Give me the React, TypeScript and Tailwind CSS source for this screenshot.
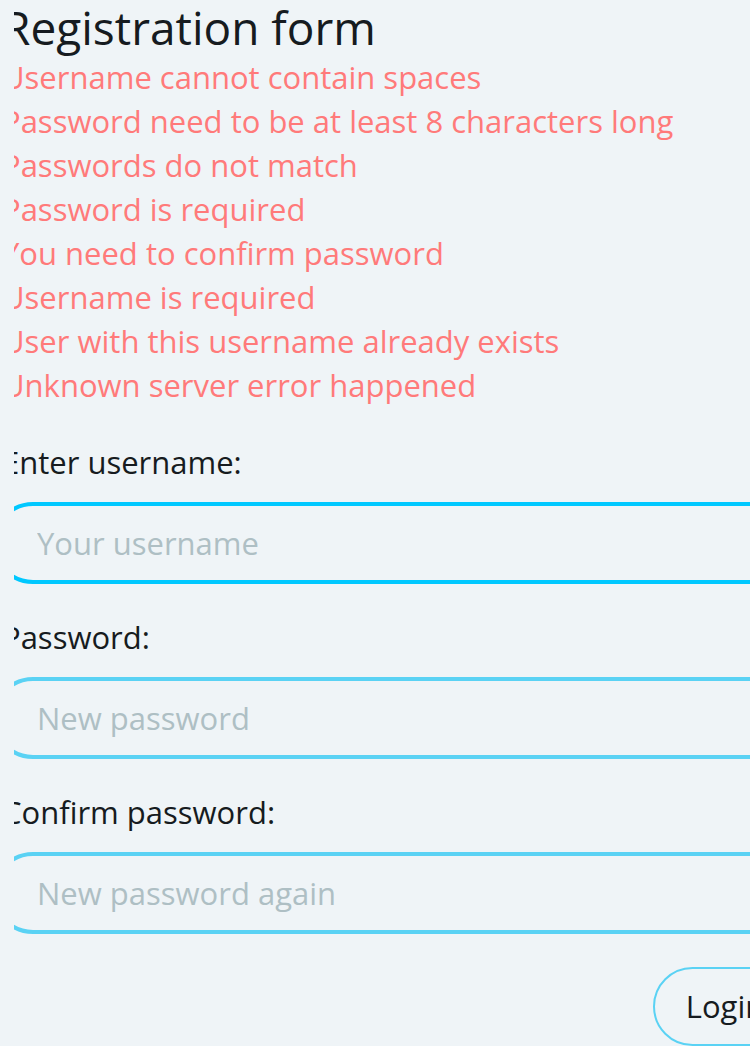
import React from 'react';

const errors = [
  'Username cannot contain spaces',
  'Password need to be at least 8 characters long',
  'Passwords do not match',
  'Password is required',
  'You need to confirm password',
  'Username is required',
  'User with this username already exists',
  'Unknown server error happened',
];

const fields = [
  { label: 'Enter username:', placeholder: 'Your username', type: 'text', focused: true },
  { label: 'Password:', placeholder: 'New password', type: 'password', focused: false },
  { label: 'Confirm password:', placeholder: 'New password again', type: 'password', focused: false },
];

const App: React.FC = () => {
  return (
    <div
      className="min-h-screen bg-[#eff4f7] overflow-hidden text-[#161b20]"
      style={{ fontFamily: '"Open Sans", "Noto Sans", sans-serif' }}
    >
      <div className="ml-[14px] overflow-hidden h-[1046px]">
        <div className="-ml-[22px] w-[811px]">
          <div className="pl-[10px]">
            <h1 className="text-[46px] leading-[56px] -mt-[1px]">Registration form</h1>
            <ul className="text-[31px] leading-[44px] text-[#ff7a7a]">
              {errors.map((e) => (
                <li key={e}>{e}</li>
              ))}
            </ul>
          </div>

          <form className="mt-[33px] flex flex-col">
            {fields.map((f, i) => (
              <div key={f.label} className={i > 0 ? 'mt-[31px]' : ''}>
                <label className="block pl-[10px] text-[31px] leading-[44px]">{f.label}</label>
                <input
                  type={f.type}
                  placeholder={f.placeholder}
                  className={
                    'mt-[18px] block w-full h-[82px] rounded-full border-4 bg-transparent pl-[41px] text-[31px] outline-none placeholder:text-[#aebfc4] ' +
                    (f.focused ? 'border-[#00c8ff]' : 'border-[#5ad2f4]')
                  }
                />
              </div>
            ))}
            <div className="mt-[33px] flex justify-end">
              <button
                type="button"
                className="h-[79px] w-[150px] rounded-full border-2 border-[#5ad2f4] pr-[6px] text-[31px] text-[#161b20]"
              >
                Login
              </button>
            </div>
          </form>
        </div>
      </div>
    </div>
  );
};

export default App;
